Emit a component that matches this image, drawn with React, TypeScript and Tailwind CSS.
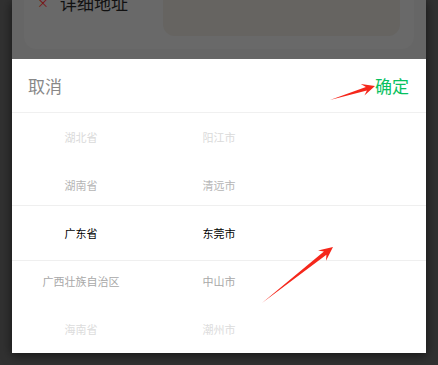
import React from "react";

type P = [number, number];
function arrowPoints(tail: P, tip: P, L = 13, W = 6, w = 1.8): string {
  const dx = tip[0] - tail[0];
  const dy = tip[1] - tail[1];
  const len = Math.hypot(dx, dy);
  const ux = dx / len, uy = dy / len;
  const nx = -uy, ny = ux;
  const bx = tip[0] - ux * L, by = tip[1] - uy * L;
  const bx2 = tip[0] - ux * (L - 4), by2 = tip[1] - uy * (L - 4);
  const pts: P[] = [
    tail,
    [bx2 - nx * w, by2 - ny * w],
    [bx - nx * W, by - ny * W],
    tip,
    [bx + nx * W, by + ny * W],
    [bx2 + nx * w, by2 + ny * w],
  ];
  return pts.map((p) => `${p[0].toFixed(1)},${p[1].toFixed(1)}`).join(" ");
}

const rows = [
  { p: "湖北省", c: "阳江市", cls: "text-[#dadada]" },
  { p: "湖南省", c: "清远市", cls: "text-[#b5b5b5]" },
  { p: "广东省", c: "东莞市", cls: "text-black" },
  { p: "广西壮族自治区", c: "中山市", cls: "text-[#a8a8a8]" },
  { p: "海南省", c: "潮州市", cls: "text-[#dcdcdc]" },
];

export default function App() {
  return (
    <div
      className="relative w-[438px] h-[365px] bg-[#313131] overflow-hidden flex flex-col items-center"
      style={{ fontFamily: '"Noto Sans CJK SC", "Noto Sans", sans-serif' }}
    >
      <div className="w-[414px] h-[353px] flex flex-col shadow-[0_2px_10px_rgba(0,0,0,0.6)]">
        {/* dimmed page behind */}
        <div className="h-[59px] bg-[#666666] overflow-hidden px-3 shrink-0">
          <div className="h-[49px] bg-[#696969] rounded-b-[12px] flex items-start">
            <div className="flex items-center -mt-[9px] pl-[13px] w-[139px] shrink-0">
              <span className="text-[#7a1010] text-[12px] leading-none mr-[11px]">×</span>
              <span className="text-[#111] text-[17px] leading-[24px]">详细地址</span>
            </div>
            <div className="h-[36px] flex-1 mr-[14px] bg-[#666461] rounded-b-[12px]" />
          </div>
        </div>
        {/* picker panel */}
        <div className="flex-1 bg-white flex flex-col">
          <div className="h-[54px] flex items-center justify-between pl-4 pr-[17px] border-b border-[#f0f0f0] shrink-0">
            <span className="text-[17px] text-[#888888]">取消</span>
            <span className="text-[17px] text-[#07c160]">确定</span>
          </div>
          <div className="relative flex-1">
            <div className="absolute left-0 right-0 top-[92px] h-[56px] border-y border-[#efefef]" />
            <div className="flex flex-col">
              {rows.map((r, i) => (
                <div key={i} className={`h-[48px] grid grid-cols-3 items-center text-center text-[11px] ${r.cls}`}>
                  <span>{r.p}</span>
                  <span>{r.c}</span>
                  <span />
                </div>
              ))}
            </div>
          </div>
        </div>
      </div>
      <svg className="absolute left-0 top-0 pointer-events-none" width="438" height="365">
        <polygon points={arrowPoints([330, 100], [375, 86])} fill="#f5271b" />
        <polygon points={arrowPoints([262, 303], [333, 247], 14, 6.5, 2)} fill="#f5271b" />
      </svg>
    </div>
  );
}
